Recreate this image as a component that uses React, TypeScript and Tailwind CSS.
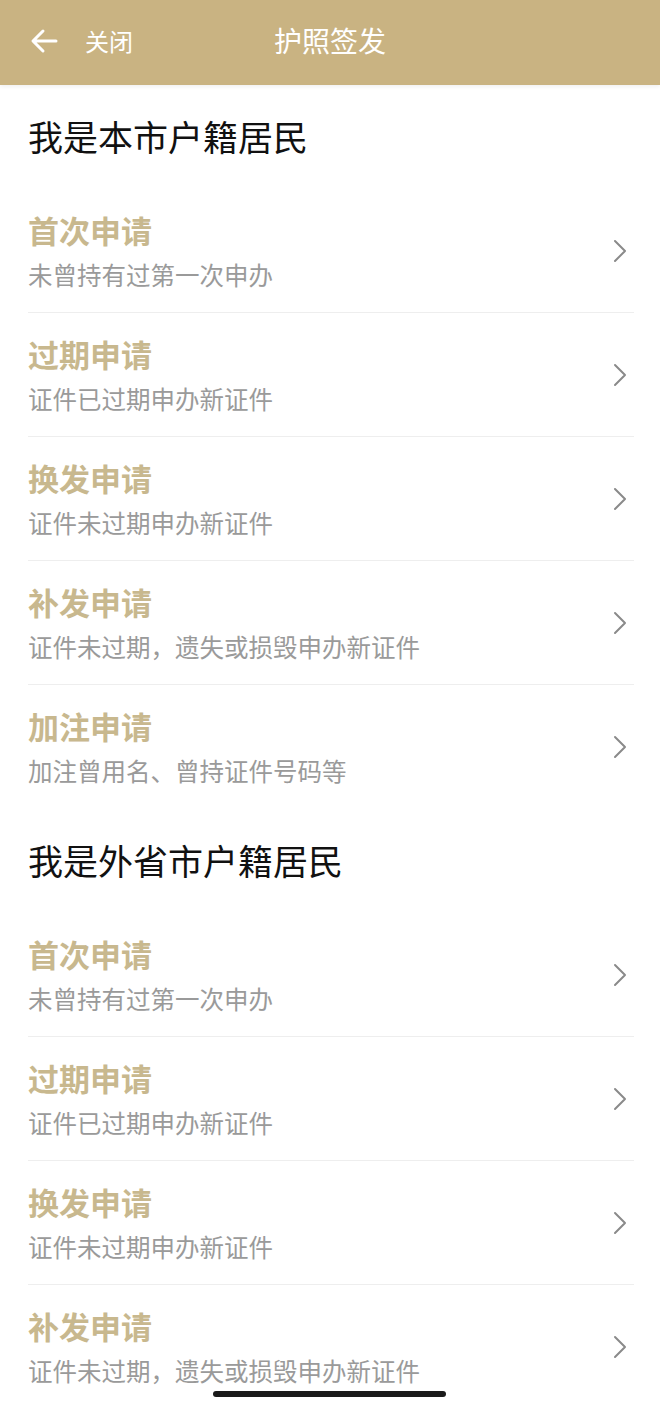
const local = [
  { title: "首次申请", desc: "未曾持有过第一次申办" },
  { title: "过期申请", desc: "证件已过期申办新证件" },
  { title: "换发申请", desc: "证件未过期申办新证件" },
  { title: "补发申请", desc: "证件未过期，遗失或损毁申办新证件" },
  { title: "加注申请", desc: "加注曾用名、曾持证件号码等" },
];

const other = local.slice(0, 4);

const Chevron = () => (
  <svg width="16" height="26" viewBox="0 0 16 26" fill="none">
    <path d="M3 3l10 10L3 23" stroke="#8a8a8a" strokeWidth="2" strokeLinecap="round" strokeLinejoin="round" />
  </svg>
);

const Row = ({ title, desc, last }: { title: string; desc: string; last?: boolean }) => (
  <div className={`flex h-[124px] items-center justify-between ${last ? "" : "border-b border-[#eeeeee]"}`}>
    <div className="flex flex-col">
      <div className="text-[31px] font-bold leading-[36px] text-[#c8b88e]">{title}</div>
      <div className="mt-[12px] text-[24.5px] leading-[30px] text-[#9a9a9a]">{desc}</div>
    </div>
    <div className="mr-[6px]">
      <Chevron />
    </div>
  </div>
);

const Section = ({ heading, items }: { heading: string; items: { title: string; desc: string }[] }) => (
  <div>
    <div className="flex h-[104px] items-center pb-[2px]">
      <h2 className="text-[35px] leading-[42px] text-[#111111]">{heading}</h2>
    </div>
    {items.map((it, i) => (
      <Row key={i} title={it.title} desc={it.desc} last={i === items.length - 1} />
    ))}
  </div>
);

export default function App() {
  return (
    <div
      className="relative h-[1407px] w-[660px] overflow-hidden bg-white"
      style={{ fontFamily: '"Noto Sans CJK SC", "Noto Sans", sans-serif' }}
    >
      <header className="relative flex h-[85px] items-center bg-[#c9b382] shadow-[0_2px_4px_rgba(0,0,0,0.06)]">
        <div className="flex items-center pb-[4px] pl-[30px]">
          <svg width="28" height="26" viewBox="0 0 28 26" fill="none">
            <path d="M26 13H4M13 3L3 13l10 10" stroke="white" strokeWidth="3" strokeLinecap="round" strokeLinejoin="round" />
          </svg>
          <span className="ml-[27px] text-[24px] text-white">关闭</span>
        </div>
        <div className="absolute left-0 right-0 top-0 flex h-[80px] items-center justify-center text-[28px] text-white">
          护照签发
        </div>
      </header>
      <main className="pl-[28px] pr-[26px]">
        <Section heading="我是本市户籍居民" items={local} />
        <Section heading="我是外省市户籍居民" items={other} />
      </main>
      <div className="absolute bottom-[10px] left-[213px] h-[6px] w-[233px] rounded-full bg-[#1a1a1a]" />
    </div>
  );
}
